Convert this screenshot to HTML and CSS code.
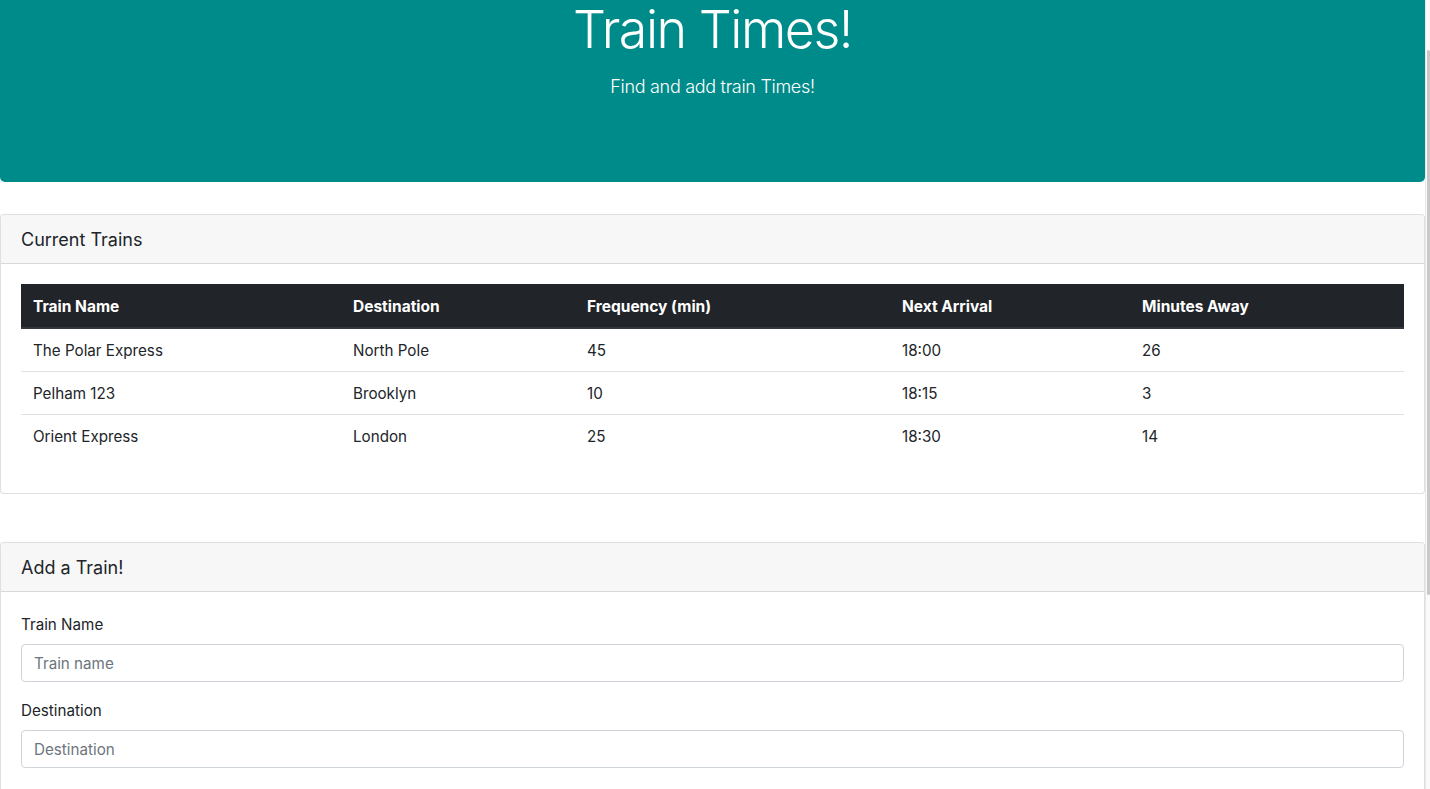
FILE: index.html
```html
<!DOCTYPE html>
<html lang="en">
<head>
<meta charset="utf-8">
<title>Train Times</title>
<link rel="stylesheet" href="styles.css">
</head>
<body>
<div class="page">
  <header class="jumbotron">
    <h1 class="title">Train Times!</h1>
    <p class="lead">Find and add train Times!</p>
  </header>

  <section class="card">
    <div class="card-header"><h5>Current Trains</h5></div>
    <div class="card-body">
      <table class="table">
        <thead>
          <tr>
            <th class="c1">Train Name</th>
            <th class="c2">Destination</th>
            <th class="c3">Frequency (min)</th>
            <th class="c4">Next Arrival</th>
            <th class="c5">Minutes Away</th>
          </tr>
        </thead>
        <tbody>
          <tr><td>The Polar Express</td><td>North Pole</td><td>45</td><td>18:00</td><td>26</td></tr>
          <tr><td>Pelham 123</td><td>Brooklyn</td><td>10</td><td>18:15</td><td>3</td></tr>
          <tr><td>Orient Express</td><td>London</td><td>25</td><td>18:30</td><td>14</td></tr>
        </tbody>
      </table>
    </div>
  </section>

  <section class="card card-add">
    <div class="card-header"><h5>Add a Train!</h5></div>
    <div class="card-body">
      <form>
        <div class="form-group">
          <label for="name">Train Name</label>
          <input id="name" class="form-control" type="text" placeholder="Train name">
        </div>
        <div class="form-group">
          <label for="dest">Destination</label>
          <input id="dest" class="form-control" type="text" placeholder="Destination">
        </div>
      </form>
    </div>
  </section>
</div>
<div class="scrollbar"><div class="thumb"></div></div>
</body>
</html>
```

FILE: styles.css
```css
html, body {
  margin: 0;
  padding: 0;
  overflow: hidden;
  height: 789px;
}
body {
  font-family: "Inter", "Liberation Sans", sans-serif;
  font-size: 16px;
  line-height: 1.5;
  color: #212529;
  background: #fff;
}
.page {
  width: 1425px;
}
.jumbotron {
  background: #008b8b;
  color: #fff;
  text-align: center;
  padding: 0 32px 64px;
  border-radius: 0 0 5px 5px;
  margin-bottom: 32px;
}
.title {
  margin: -4px 0 9px;
  font-size: 52px;
  font-weight: 300;
  line-height: 67px;
  letter-spacing: -1.5px;
}
.lead {
  margin: 0 0 16px;
  font-size: 18px;
  font-weight: 300;
  line-height: 30px;
  letter-spacing: -0.3px;
}
.card {
  border: 1px solid rgba(0,0,0,0.125);
  border-radius: 4px;
  background: #fff;
}
.card-add {
  margin-top: 48px;
}
.card-header {
  background: #f7f7f7;
  padding: 13px 20px 11px;
  border-bottom: 1px solid rgba(0,0,0,0.125);
  border-radius: 3px 3px 0 0;
}
.card-header h5 {
  margin: 0;
  font-size: 18px;
  font-weight: 400;
  line-height: 24px;
}
.card-body {
  padding: 20px;
}
.table {
  width: 100%;
  border-collapse: collapse;
  margin-bottom: 16px;
  table-layout: fixed;
}
.table th, .table td {
  text-align: left;
  padding: 10px 12px 8px;
  line-height: 24px;
  font-size: 15.2px;
  vertical-align: top;
}
.table td {
  border-top: 1px solid #dee2e6;
}
.table tbody tr:first-child td {
  border-top: none;
}
.table thead th {
  background: #212529;
  color: #fff;
  font-weight: 700;
  font-size: 15.5px;
  border-bottom: 2px solid #32383e;
  padding: 11px 12px 8px;
}
.c1 { width: 296px; }
.c2 { width: 210px; }
.c3 { width: 291px; }
.c4 { width: 216px; }
.form-group {
  margin-bottom: 16px;
}
label {
  display: block;
  padding-top: 1px;
  margin-bottom: 7px;
  line-height: 24px;
  font-size: 15.2px;
}
.form-control {
  display: block;
  width: 100%;
  box-sizing: border-box;
  height: 38px;
  padding: 6px 12px;
  font-family: inherit;
  font-size: 15.2px;
  line-height: 24px;
  color: #495057;
  background: #fff;
  border: 1px solid #ced4da;
  border-radius: 4px;
  outline: none;
}
.form-control::placeholder {
  color: #6c757d;
  opacity: 1;
}
.scrollbar {
  position: fixed;
  top: 0;
  right: 0;
  width: 4px;
  height: 789px;
  background: #fafafa;
  border-left: 1px solid #e8e8e8;
}
.thumb {
  position: absolute;
  left: 1px;
  top: 50px;
  width: 3px;
  height: 545px;
  background: #c8c8c8;
  border-radius: 2px;
}
```
